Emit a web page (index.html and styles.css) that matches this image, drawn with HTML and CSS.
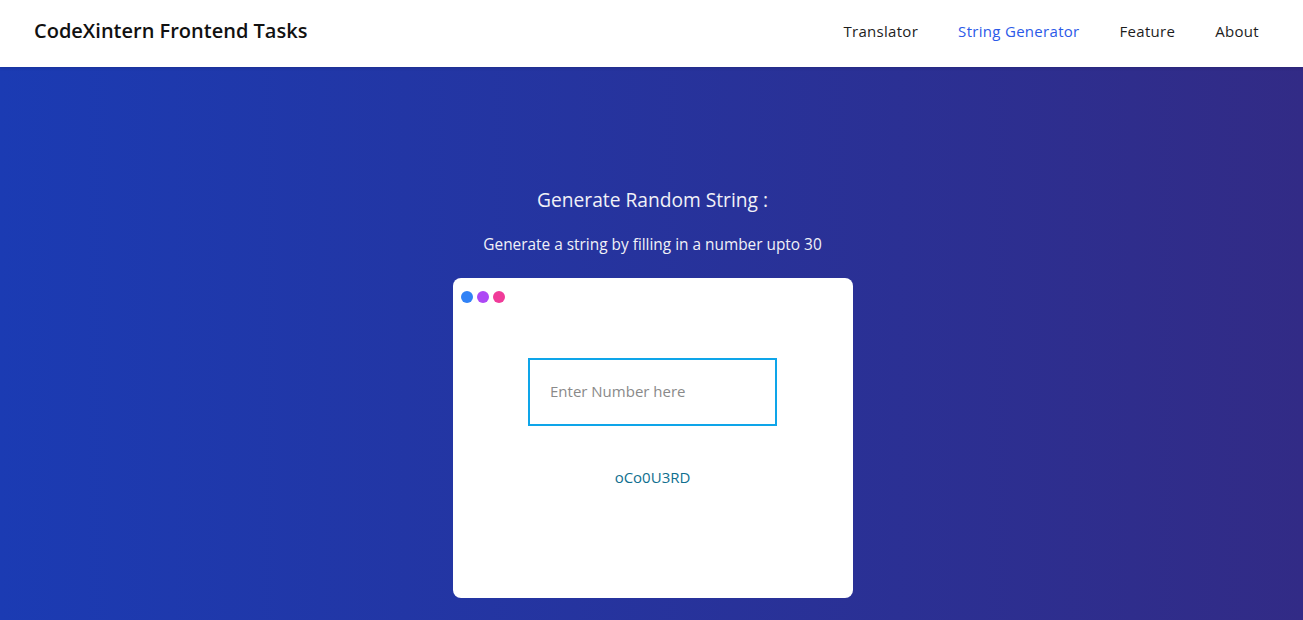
FILE: index.html
```html
<!DOCTYPE html>
<html lang="en">
<head>
<meta charset="utf-8">
<title>CodeXintern Frontend Tasks</title>
<link rel="stylesheet" href="styles.css">
</head>
<body>
<header class="topbar">
  <div class="brand">CodeXintern Frontend Tasks</div>
  <nav class="nav">
    <a class="nav-link" href="#">Translator</a>
    <a class="nav-link active" href="#">String Generator</a>
    <a class="nav-link" href="#">Feature</a>
    <a class="nav-link" href="#">About</a>
  </nav>
</header>
<main class="hero">
  <h2 class="title">Generate Random String :</h2>
  <p class="subtitle">Generate a string by filling in a number upto 30</p>
  <section class="card">
    <div class="dots">
      <span class="dot dot-blue"></span>
      <span class="dot dot-purple"></span>
      <span class="dot dot-pink"></span>
    </div>
    <div class="card-body">
      <input class="num-input" type="text" placeholder="Enter Number here">
      <div class="result">oCo0U3RD</div>
    </div>
  </section>
</main>
</body>
</html>
```
FILE: styles.css
```css
* { box-sizing: border-box; }
html, body { margin: 0; padding: 0; }
body {
  font-family: "Open Sans", "Noto Sans", sans-serif;
  height: 620px;
  overflow: hidden;
  background: #2a2f9a;
}
.topbar {
  height: 67px;
  background: #fff;
  display: flex;
  align-items: center;
  justify-content: space-between;
  padding: 0 44px 6px 34px;
  position: relative;
  z-index: 1;
  box-shadow: 0 1px 3px rgba(0,0,0,0.15);
}
.brand {
  font-size: 20px;
  font-weight: 600;
  color: #111;
}
.nav { display: flex; gap: 40px; }
.nav-link {
  font-size: 15px;
  letter-spacing: 0.3px;
  color: #1d1d1d;
  text-decoration: none;
}
.nav-link.active { color: #2b5ae8; }
.hero {
  height: 553px;
  background: linear-gradient(to right, #1b3bb3, #322b86);
  display: flex;
  flex-direction: column;
  align-items: center;
  padding-top: 119px;
  color: #f1f1f7;
}
.title {
  margin: 0 0 0 2px;
  font-size: 19.2px;
  font-weight: 400;
  line-height: 28px;
}
.subtitle {
  margin: 19px 0 0 2px;
  font-size: 15.4px;
  line-height: 24px;
}
.card {
  margin-top: 21px;
  margin-left: 2px;
  width: 400px;
  height: 320px;
  background: #fff;
  border-radius: 8px;
  padding: 13px 8px;
}
.dots { display: flex; gap: 4px; }
.dot { width: 12px; height: 12px; border-radius: 50%; }
.dot-blue { background: #3182f6; }
.dot-purple { background: #ad48f5; }
.dot-pink { background: #f03b99; }
.card-body {
  display: flex;
  flex-direction: column;
  align-items: center;
  margin-top: 55px;
}
.num-input {
  width: 249px;
  height: 68px;
  border: 2px solid #0ea5e9;
  padding: 0 20px 2px;
  font-family: inherit;
  font-size: 15px;
  color: #333;
  outline: none;
}
.num-input::placeholder { color: #8a8a8a; }
.result {
  margin-top: 39px;
  font-size: 15px;
  line-height: 24px;
  color: #0f6f8f;
}
```
